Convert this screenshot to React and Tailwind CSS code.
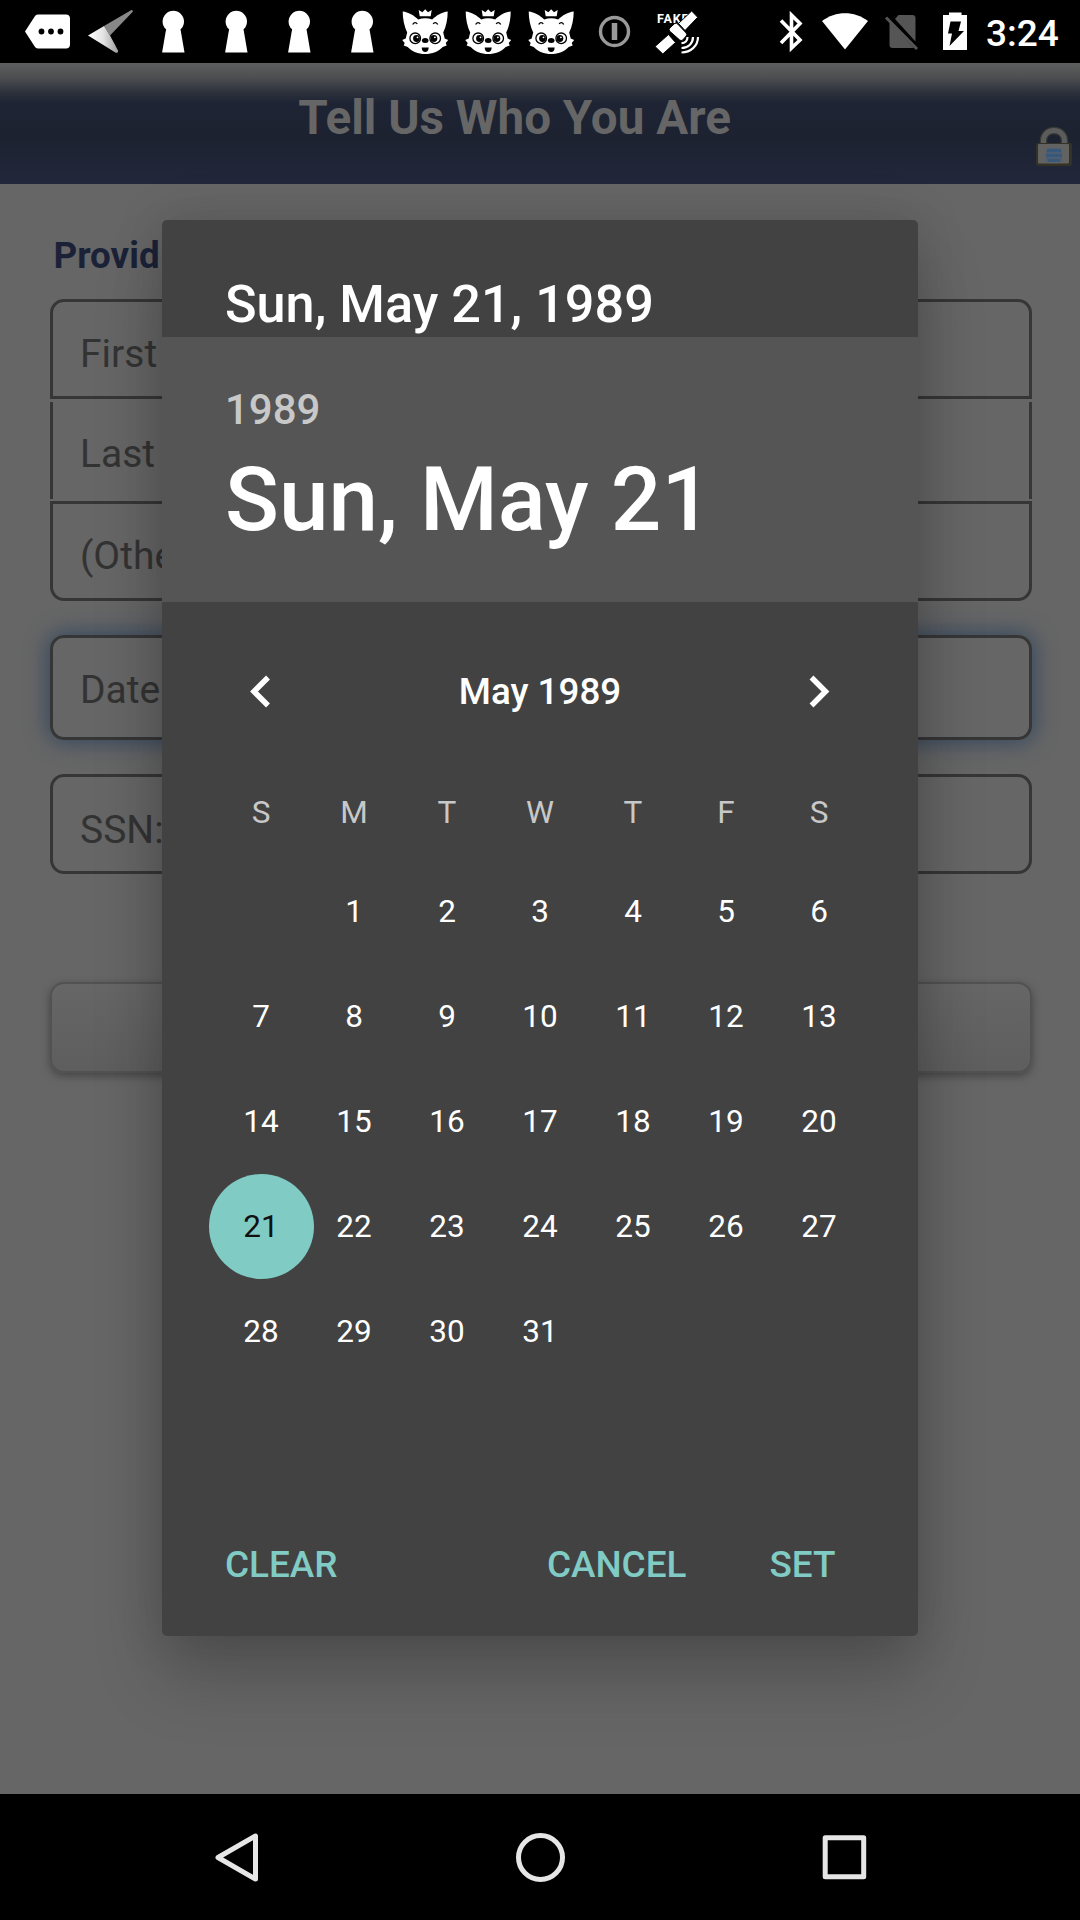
const WEEKDAYS = ["S", "M", "T", "W", "T", "F", "S"];
const DAYS = [null, ...Array.from({ length: 31 }, (_, i) => i + 1)];

function Keyhole() {
  return (
    <svg className="h-[63px] w-[63px] shrink-0" viewBox="0 0 63 63" fill="#fff">
      <circle cx="31.3" cy="21.500" r="10.7" />
      <path d="M24.8 27h13l1 4 3.700 21.400H20.100L23.800 31Z" />
    </svg>
  );
}

function Fox() {
  return (
    <svg className="h-[63px] w-[63px] shrink-0" viewBox="0.8 0 63 63">
      <g fill="#fff">
        <path d="M25.500 10l3.700 2.300L32 9.300l2.800 3 3.700-2.300-1 6.300h-11Z" />
        <path d="M9.500 11.500c5.500.5 11.500 4 15.500 8 4.500-1.700 9.500-1.700 14 0 4-4 10-7.500 15.500-8 0 7.500-1.500 15-4.500 21l1.500 6 3.500 1.500-2.500 3 1 2.500-4 1.500C45.500 51.500 39 54 32 54s-13.500-2.500-17.500-7l-4-1.500 1-2.500-2.500-3 3.500-1.500 1.500-6c-3-6-4.500-13.500-4.500-21Z" />
      </g>
      <g fill="none" stroke="#000" strokeWidth="1.300">
        <path d="M19.500 24.500c1-2.500 3.500-2.500 4.500-.5M40 24c1-2 3.500-2 4.500.5" />
        <circle cx="22" cy="38.300" r="5.300" />
        <circle cx="42" cy="38.300" r="5.300" />
      </g>
      <circle cx="23.3" cy="38.500" r="3.400" />
      <circle cx="40.700" cy="38.500" r="3.400" />
      <circle cx="24.300" cy="37.300" r="0.900" fill="#fff" />
      <circle cx="41.700" cy="37.300" r="0.900" fill="#fff" />
      <ellipse cx="32" cy="40.500" rx="3.300" ry="2.500" />
      <path d="M28.500 47.500h7c0 6-7 6-7 0Z" />
    </svg>
  );
}

function StatusBar() {
  return (
    <div className="flex h-[63px] items-center bg-black">
      <div className="flex flex-1 pl-4">
        <svg className="h-[63px] w-[63px] shrink-0" viewBox="0 0 63 63">
          <path d="M22 14.500h28c2.500 0 4 1.500 4 4v26c0 2.500-1.500 4-4 4H22c-1.500 0-2.500-.7-3.300-2L9 31.500l9.700-15c.8-1.300 1.800-2 3.300-2Z" fill="#fff" />
          <circle cx="25.500" cy="31.500" r="2.900" />
          <circle cx="35" cy="31.500" r="2.900" />
          <circle cx="44.500" cy="31.500" r="2.900" />
        </svg>
        <svg className="h-[63px] w-[63px] shrink-0" viewBox="0 0 63 63">
          <defs>
            <linearGradient id="wing" x1="0" x2="1" y1="0" y2="0">
              <stop offset="0" stopColor="#fff" />
              <stop offset="0.5" stopColor="#e4e4e4" />
              <stop offset="1" stopColor="#9c9c9c" />
            </linearGradient>
          </defs>
          <path d="M25 26L52 10.200c1.500-.8 2.500.6 1.300 2L31 35.500Z" fill="#888" />
          <path d="M9 35.500L25 26l6 9.500 8 15c.7 2-1.500 3-3 1.800Z" fill="url(#wing)" />
        </svg>
        <Keyhole />
        <Keyhole />
        <Keyhole />
        <Keyhole />
        <Fox />
        <Fox />
        <Fox />
        <svg className="h-[63px] w-[63px] shrink-0" viewBox="0 0 63 63" fill="none" stroke="#999">
          <circle cx="31.500" cy="31.500" r="14" strokeWidth="3.400" />
          <path d="M31.500 23v17" strokeWidth="5.500" />
        </svg>
        <svg className="h-[63px] w-[63px] shrink-0" viewBox="0 0 63 63">
          <text x="11" y="22.700" fill="#fff" fontFamily="Roboto" fontSize="12.500" fontWeight="700" letterSpacing="0.8">FAKE</text>
          <g fill="#fff" stroke="#000" strokeWidth="1" strokeLinejoin="round">
            <path d="M45.700 11l6 6.300L39 30.500 32.500 23.500Z" />
            <path d="M22.500 34.500l7 8-12.700 11.500L9 46.500Z" />
            <path d="M28.700 23.500q1.500-1 3 .5l8.500 9q1.200 1.500 0 3l-3.500 4q-1.500 1.200-3 0L23.500 31q-1-1.500.3-3Z" />
          </g>
          <path d="M41.500 37c0 3.500-2.500 6.200-6 6.200M47 37c0 6.500-5 11-11.500 11M52 37c0 9-7.500 15.500-16.500 15.500" fill="none" stroke="#fff" strokeWidth="2.200" />
        </svg>
      </div>
      <svg className="h-[63px] w-[310px] shrink-0" viewBox="770 0 310 63">
        <path d="M781 20.500l19 19.500-8.500 8V15l8.500 8.500-19 19.500" fill="none" stroke="#fff" strokeWidth="3.600" />
        <path d="M822 21c13.500-10.500 32.500-10.500 46 0L845 49.500Z" fill="#fff" />
        <path d="M898.500 15h14c1.800 0 3 1.200 3 3v23.500L895 19ZM889.500 22L914 48h-21.500c-1.800 0-3-1.200-3-3Z" fill="#555" />
        <path d="M886 17.500L917 49" stroke="#555" strokeWidth="3" />
        <path d="M949 15v-2.500h12.500V15H967v35h-24V15Z" fill="#fff" />
        <path d="M950.500 21.500H961l-2.500 9.500h5.500L949.500 46l2.500-12.500h-4Z" />
        <text x="986" y="45.500" fill="#fff" fontFamily="Roboto" fontSize="37" fontWeight="500">3:24</text>
      </svg>
    </div>
  );
}

function PageHeader() {
  return (
    <div className="relative flex h-[121px] justify-center bg-[linear-gradient(to_bottom,#5e5e5e_0px,#4e4f51_14px,#2b303b_30px,#1e2433_40px,#1c2230_75px,#22283b_121px)]">
      <h1 className="mt-[25px] -ml-[51px] text-[47.6px] leading-[60px] font-bold text-[#666]">Tell Us Who You Are</h1>
      <svg className="absolute top-[62px] right-[6px] h-[44px] w-[40px]" viewBox="0 0 40 44">
        <path d="M9.500 20v-4c0-14 21-14 21 0v4" fill="none" stroke="#3a3a34" strokeWidth="7.500" />
        <path d="M9.500 20v-4c0-14 21-14 21 0v4" fill="none" stroke="#5c5c5c" strokeWidth="5" />
        <rect x="2" y="18" width="36" height="23" rx="2" fill="#333226" />
        <rect x="4" y="19" width="31" height="19.500" rx="1" fill="#626262" />
        <rect x="12" y="23" width="16" height="14" rx="4" fill="#4d5e72" />
        <path d="M13 25.500h14M12 30.500h16M14 35.500h12" stroke="#34587c" strokeWidth="2.500" />
      </svg>
    </div>
  );
}

function Form() {
  return (
    <div className="flex flex-1 flex-col bg-[#666] pr-[48.5px] pl-[50px] text-[39px] leading-[46px] text-[#333]">
      <h2 className="mt-[51px] ml-[3.5px] text-[36.75px] leading-[42px] font-bold text-[#1b2238]">Provid</h2>
      <div className="mt-[22px] h-[100px] rounded-t-[14px] border-[3px] border-[#363636] pt-[29px] pl-[27px]">First</div>
      <div className="mt-[3px] h-[97px] border-x-[3px] border-[#363636] pt-[29px] pl-[27px]">Last</div>
      <div className="mt-[2px] h-[100px] rounded-b-[14px] border-[3px] border-[#363636] pt-[29px] pl-[27px]">(Othe</div>
      <div className="mt-[34px] h-[105px] rounded-[14px] border-[3px] border-[#363636] pt-[29px] pl-[27px] shadow-[0_0_22px_2px_#33475f]">Date</div>
      <div className="mt-[34px] h-[100px] rounded-[14px] border-[3px] border-[#363636] pt-[30px] pl-[27px]">SSN:</div>
      <div className="mt-[108px] h-[91px] rounded-[14px] border-[2px] border-[#525252] bg-gradient-to-b from-[#666] to-[#5e5e5e] shadow-[0_3px_8px_#444]" />
    </div>
  );
}

function Chevron({ d }) {
  return (
    <svg className="h-[93px] w-[93px]" viewBox="0 0 93 93" fill="none" stroke="#fff" strokeWidth="5.500">
      <path d={d} />
    </svg>
  );
}

function DateDialog() {
  return (
    <div className="absolute top-[220px] left-[162px] flex h-[1416px] w-[756px] flex-col overflow-hidden rounded-[5px] bg-[#424242] text-white shadow-[0_42px_70px_rgba(0,0,0,0.2),0_0_50px_rgba(0,0,0,0.15)]">
      <div className="h-[117px] pt-[54px] pl-[63px] text-[52.2px] leading-[62px] font-medium">Sun, May 21, 1989</div>
      <div className="flex h-[265px] flex-col bg-[#555] pl-[63px] font-medium">
        <div className="mt-[48px] text-[42px] leading-[50px] text-[#c8c8c8]">1989</div>
        <div className="mt-[12px] text-[89px] leading-[105px]">Sun, May 21</div>
      </div>
      <div className="mt-[43px] flex h-[93px] items-center justify-between px-[52.5px]">
        <Chevron d="M53 32.500L39 46.500 53 60.500" />
        <div className="text-[36.75px] leading-[44px] font-medium">May 1989</div>
        <Chevron d="M38.500 32.500L52.500 46.500 38.500 60.500" />
      </div>
      <div className="mt-[46px] grid grid-cols-7 px-[52.5px] text-center text-[31.5px] leading-[58px] text-[#c8c8c8]">
        {WEEKDAYS.map((d, i) => (
          <div key={i}>{d}</div>
        ))}
      </div>
      <div className="mt-[17px] grid auto-rows-[105px] grid-cols-7 px-[52.5px] text-[31.5px]">
        {DAYS.map((d, i) => (
          <div key={i} className="flex items-center justify-center">
            {d === 21 ? (
              <span className="flex h-[105px] w-[105px] shrink-0 items-center justify-center rounded-full bg-[#80cbc4] text-[#111]">21</span>
            ) : (
              d
            )}
          </div>
        ))}
      </div>
      <div className="mt-auto mb-[49px] flex pr-[82.5px] pl-[63px] text-[36.9px] leading-[44px] font-medium text-[#80cbc4]">
        <span>CLEAR</span>
        <span className="ml-auto">CANCEL</span>
        <span className="ml-[83px]">SET</span>
      </div>
    </div>
  );
}

function NavBar() {
  return (
    <div className="flex h-[126px] items-center justify-center gap-[178px] bg-black">
      <svg className="h-[126px] w-[126px]" viewBox="0 0 126 126" fill="none" stroke="#e6e6e6" strokeWidth="5" strokeLinejoin="round">
        <path d="M82.500 42v43L45 63.500Z" />
      </svg>
      <svg className="h-[126px] w-[126px]" viewBox="0 0 126 126" fill="none" stroke="#e6e6e6" strokeWidth="5">
        <circle cx="63.500" cy="63.500" r="22" />
      </svg>
      <svg className="h-[126px] w-[126px]" viewBox="0 0 126 126" fill="none" stroke="#e6e6e6" strokeWidth="5" strokeLinejoin="round">
        <rect x="44.200" y="43.800" width="38.500" height="39" />
      </svg>
    </div>
  );
}

export default function App() {
  return (
    <div className="relative flex h-[1920px] w-[1080px] flex-col overflow-hidden bg-black font-['Roboto',sans-serif]">
      <StatusBar />
      <PageHeader />
      <Form />
      <NavBar />
      <DateDialog />
    </div>
  );
}
